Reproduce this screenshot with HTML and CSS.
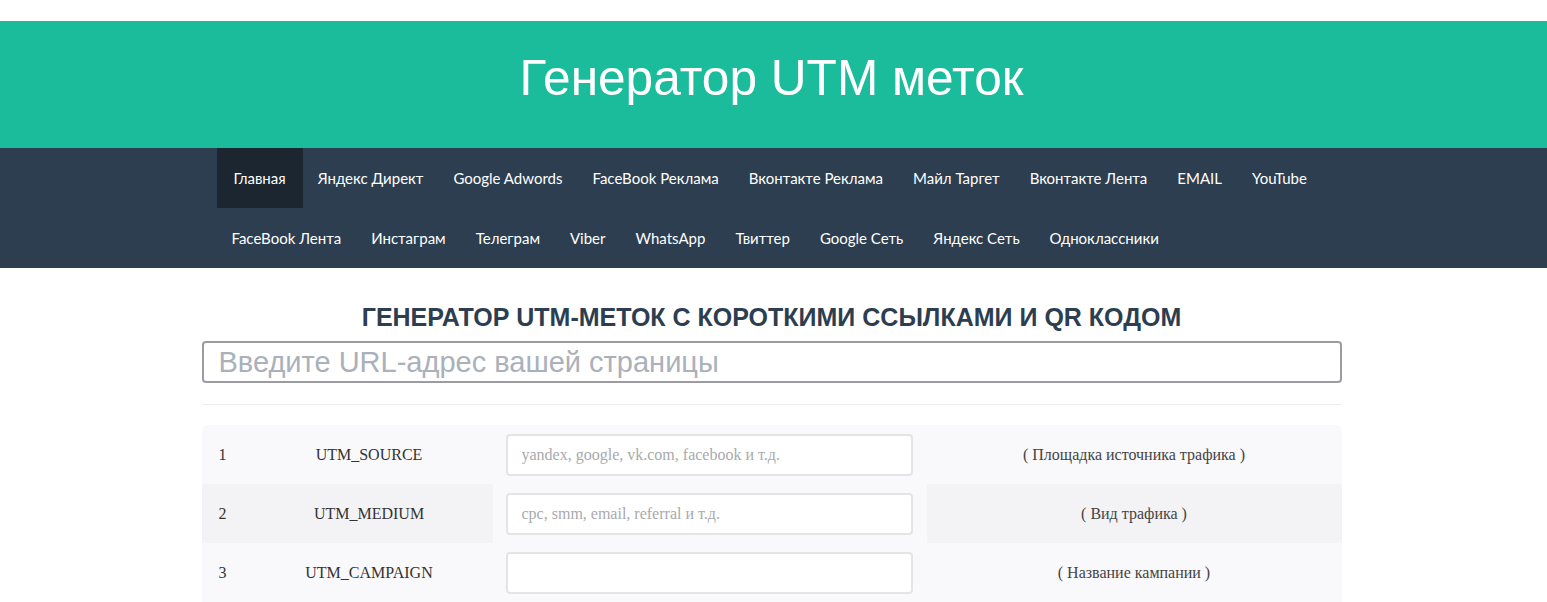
FILE: index.html
```html
<!DOCTYPE html>
<html lang="ru">
<head>
<meta charset="utf-8">
<title>Генератор UTM меток</title>
<link rel="stylesheet" href="styles.css">
</head>
<body>
<header class="hero">
  <h1 class="hero-title">Генератор UTM меток</h1>
</header>
<nav class="navbar">
  <ul class="nav-list">
    <li><a class="nav-link active" href="#">Главная</a></li>
    <li><a class="nav-link" href="#">Яндекс Директ</a></li>
    <li><a class="nav-link" href="#">Google Adwords</a></li>
    <li><a class="nav-link" href="#">FaceBook Реклама</a></li>
    <li><a class="nav-link" href="#">Вконтакте Реклама</a></li>
    <li><a class="nav-link" href="#">Майл Таргет</a></li>
    <li><a class="nav-link" href="#">Вконтакте Лента</a></li>
    <li><a class="nav-link" href="#">EMAIL</a></li>
    <li><a class="nav-link" href="#">YouTube</a></li>
    <li><a class="nav-link" href="#">FaceBook Лента</a></li>
    <li><a class="nav-link" href="#">Инстаграм</a></li>
    <li><a class="nav-link" href="#">Телеграм</a></li>
    <li><a class="nav-link" href="#">Viber</a></li>
    <li><a class="nav-link" href="#">WhatsApp</a></li>
    <li><a class="nav-link" href="#">Твиттер</a></li>
    <li><a class="nav-link" href="#">Google Сеть</a></li>
    <li><a class="nav-link" href="#">Яндекс Сеть</a></li>
    <li><a class="nav-link" href="#">Одноклассники</a></li>
  </ul>
</nav>
<main class="container">
  <h2 class="section-title">ГЕНЕРАТОР UTM-МЕТОК С КОРОТКИМИ ССЫЛКАМИ И QR КОДОМ</h2>
  <input class="url-input" type="text" placeholder="Введите URL-адрес вашей страницы">
  <hr class="divider">
  <div class="utm-table">
    <div class="utm-row">
      <div class="cell num">1</div>
      <div class="cell name">UTM_SOURCE</div>
      <div class="cell field"><input class="utm-input" type="text" placeholder="yandex, google, vk.com, facebook и т.д."></div>
      <div class="cell desc">( Площадка источника трафика )</div>
    </div>
    <div class="utm-row alt">
      <div class="cell num">2</div>
      <div class="cell name">UTM_MEDIUM</div>
      <div class="cell field"><input class="utm-input" type="text" placeholder="cpc, smm, email, referral и т.д."></div>
      <div class="cell desc">( Вид трафика )</div>
    </div>
    <div class="utm-row">
      <div class="cell num">3</div>
      <div class="cell name">UTM_CAMPAIGN</div>
      <div class="cell field"><input class="utm-input" type="text"></div>
      <div class="cell desc">( Название кампании )</div>
    </div>
  </div>
</main>
</body>
</html>
```
FILE: styles.css
```css
* { box-sizing: border-box; }
html, body { margin: 0; padding: 0; background: #ffffff; }
body { padding-top: 21px; font-family: "Liberation Sans", Arial, sans-serif; }

.hero {
  background: #1abc9c;
  height: 127px;
  display: flex;
  align-items: center;
  justify-content: center;
}
.hero-title {
  margin: 0;
  color: #ffffff;
  font-family: "Liberation Sans", Arial, sans-serif;
  font-weight: 400;
  font-size: 49.6px;
  line-height: 1;
  padding: 0 4px 12px 0;
}

.navbar { background: #2c3e50; }
.nav-list {
  list-style: none;
  margin: 0 0 0 calc(50% - 572px);
  padding: 0 15px;
  width: 1140px;
  display: flex;
  flex-wrap: wrap;
}
.nav-link {
  display: block;
  padding: 20px 15px;
  line-height: 20px;
  font-family: Lato, "Noto Sans", sans-serif;
  font-size: 15px;
  color: #ffffff;
  text-decoration: none;
}
.nav-link.active { background: #1b2631; padding: 20px 17px; }

.container { width: 1140px; margin: 0 0 0 calc(50% - 572px); }

.section-title {
  margin: 36px 0 11px;
  text-align: center;
  color: #2c3e50;
  font-family: "Liberation Sans", Arial, sans-serif;
  font-weight: 700;
  font-size: 25px;
  line-height: 26px;
}

.url-input {
  display: block;
  width: 100%;
  height: 42px;
  border: 2px solid #9b9ba1;
  border-radius: 4px;
  padding: 0 15px;
  font-family: "Liberation Sans", Arial, sans-serif;
  font-size: 29px;
  color: #333;
  background: #fff;
  outline: none;
}
.url-input::placeholder { color: #aab1ba; }

.divider {
  margin: 21px 0 20px;
  border: 0;
  border-top: 1px solid #eeeeef;
}

.utm-table {
  border-top-left-radius: 6px;
  border-top-right-radius: 6px;
  overflow: hidden;
  font-family: "Liberation Serif", "Times New Roman", serif;
  font-size: 16px;
}
.utm-row {
  display: grid;
  grid-template-columns: 44px 247px 434px 1fr;
  height: 59px;
  background: #f9f8fa;
}
.utm-row.alt { background: #f3f3f5; }
.cell { display: flex; align-items: center; }
.num { padding-left: 17px; color: #333; }
.name { justify-content: center; color: #333; }
.field { padding: 0 14px 0 13px; background: #f9f8fa; }
.desc { justify-content: center; color: #444; }

.utm-input {
  width: 100%;
  height: 42px;
  border: 2px solid #e4e4e6;
  border-radius: 4px;
  background: #ffffff;
  padding: 0 14px;
  font-family: "Liberation Serif", "Times New Roman", serif;
  font-size: 16px;
  color: #333;
  outline: none;
}
.utm-input::placeholder { color: #a9a9ad; }
```
